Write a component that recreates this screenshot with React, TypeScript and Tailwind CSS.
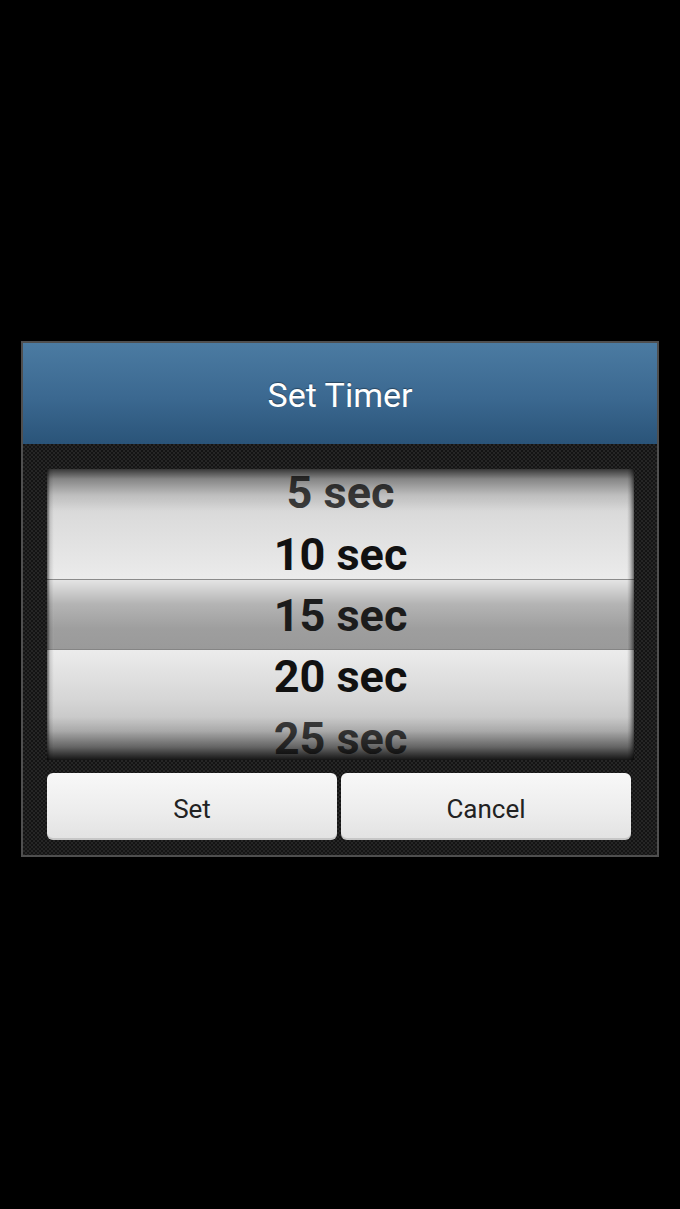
import React from "react";

const rows = [
  { label: "5 sec", tone: "text-[#3b3b3b]" },
  { label: "10 sec", tone: "text-[#111111]" },
  { label: "15 sec", tone: "text-[#1c1c1c]" },
  { label: "20 sec", tone: "text-[#111111]" },
  { label: "25 sec", tone: "text-[#3a3a3a]" },
];

function TimerPicker() {
  return (
    <div className="relative h-[291px] overflow-hidden bg-[linear-gradient(to_bottom,#c9c9c9_0px,#dcdcdc_50px,#ebebeb_110px,#8a8a8a_110px,#8a8a8a_111px,#e4e4e4_111px,#b4b4b4_135px,#9e9e9e_160px,#9a9a9a_180px,#858585_180px,#858585_181px,#ececec_181px,#d6d6d6_230px,#c2c2c2_260px,#b0b0b0_291px)]">
      <div className="flex h-full">
        {/* left rail */}
        <div className="w-[7px] shrink-0 bg-[linear-gradient(to_right,rgba(0,0,0,0.55)_0px,rgba(0,0,0,0.45)_1px,rgba(0,0,0,0.12)_3px,rgba(255,255,255,0.05)_7px)]" />

        {/* wheel */}
        <div className="-mt-[7px] flex flex-1 flex-col">
          {rows.map((r) => (
            <div
              key={r.label}
              className={`flex h-[61.4px] shrink-0 items-center justify-center text-[45px] font-bold leading-none ${r.tone}`}
            >
              {r.label}
            </div>
          ))}
        </div>

        {/* right rail */}
        <div className="w-[7px] shrink-0 bg-[linear-gradient(to_right,rgba(255,255,255,0.05)_0px,rgba(0,0,0,0.15)_3px,rgba(0,0,0,0.45)_6px,rgba(0,0,0,0.6)_7px)]" />
      </div>

      {/* top & bottom shade */}
      <div className="pointer-events-none absolute inset-0 bg-[linear-gradient(to_bottom,rgba(0,0,0,0.72)_0px,rgba(0,0,0,0.35)_10px,rgba(0,0,0,0.1)_26px,rgba(0,0,0,0)_42px,rgba(0,0,0,0)_248px,rgba(0,0,0,0.12)_262px,rgba(0,0,0,0.45)_278px,rgba(0,0,0,0.88)_291px)]" />
    </div>
  );
}

function DialogButton({ children }: { children: React.ReactNode }) {
  return (
    <button className="flex h-[67px] w-[290px] items-center justify-center rounded-[6px] bg-[linear-gradient(to_bottom,#f8f8f8,#ececec_60%,#e2e2e2)] pt-[5px] text-[26px] text-[#222222] shadow-[inset_0_-2px_0_rgba(0,0,0,0.12)]">
      {children}
    </button>
  );
}

export default function App() {
  return (
    <div
      className="h-[1209px] w-[680px] bg-black px-[21px] pt-[341px]"
      style={{ fontFamily: "Roboto, 'Noto Sans', Arial, sans-serif" }}
    >
      <div className="w-[638px] border-2 border-[#4f4f4f]">
        {/* Header */}
        <div className="flex h-[101px] items-center justify-center bg-[linear-gradient(to_bottom,#4b7ba2,#3b6890_55%,#2a5479)] pt-[4px]">
          <h1 className="text-[34px] text-white [text-shadow:0_-1px_1px_rgba(0,0,0,0.35)]">
            Set Timer
          </h1>
        </div>

        {/* Body */}
        <div className="bg-[repeating-conic-gradient(#262626_0_25%,#141414_0_50%)] bg-[length:4px_4px] pb-[15px] pl-[24px] pr-[23px] pt-[25px]">
          <TimerPicker />
          <div className="mt-[13px] flex gap-[4px]">
            <DialogButton>Set</DialogButton>
            <DialogButton>Cancel</DialogButton>
          </div>
        </div>
      </div>
    </div>
  );
}
